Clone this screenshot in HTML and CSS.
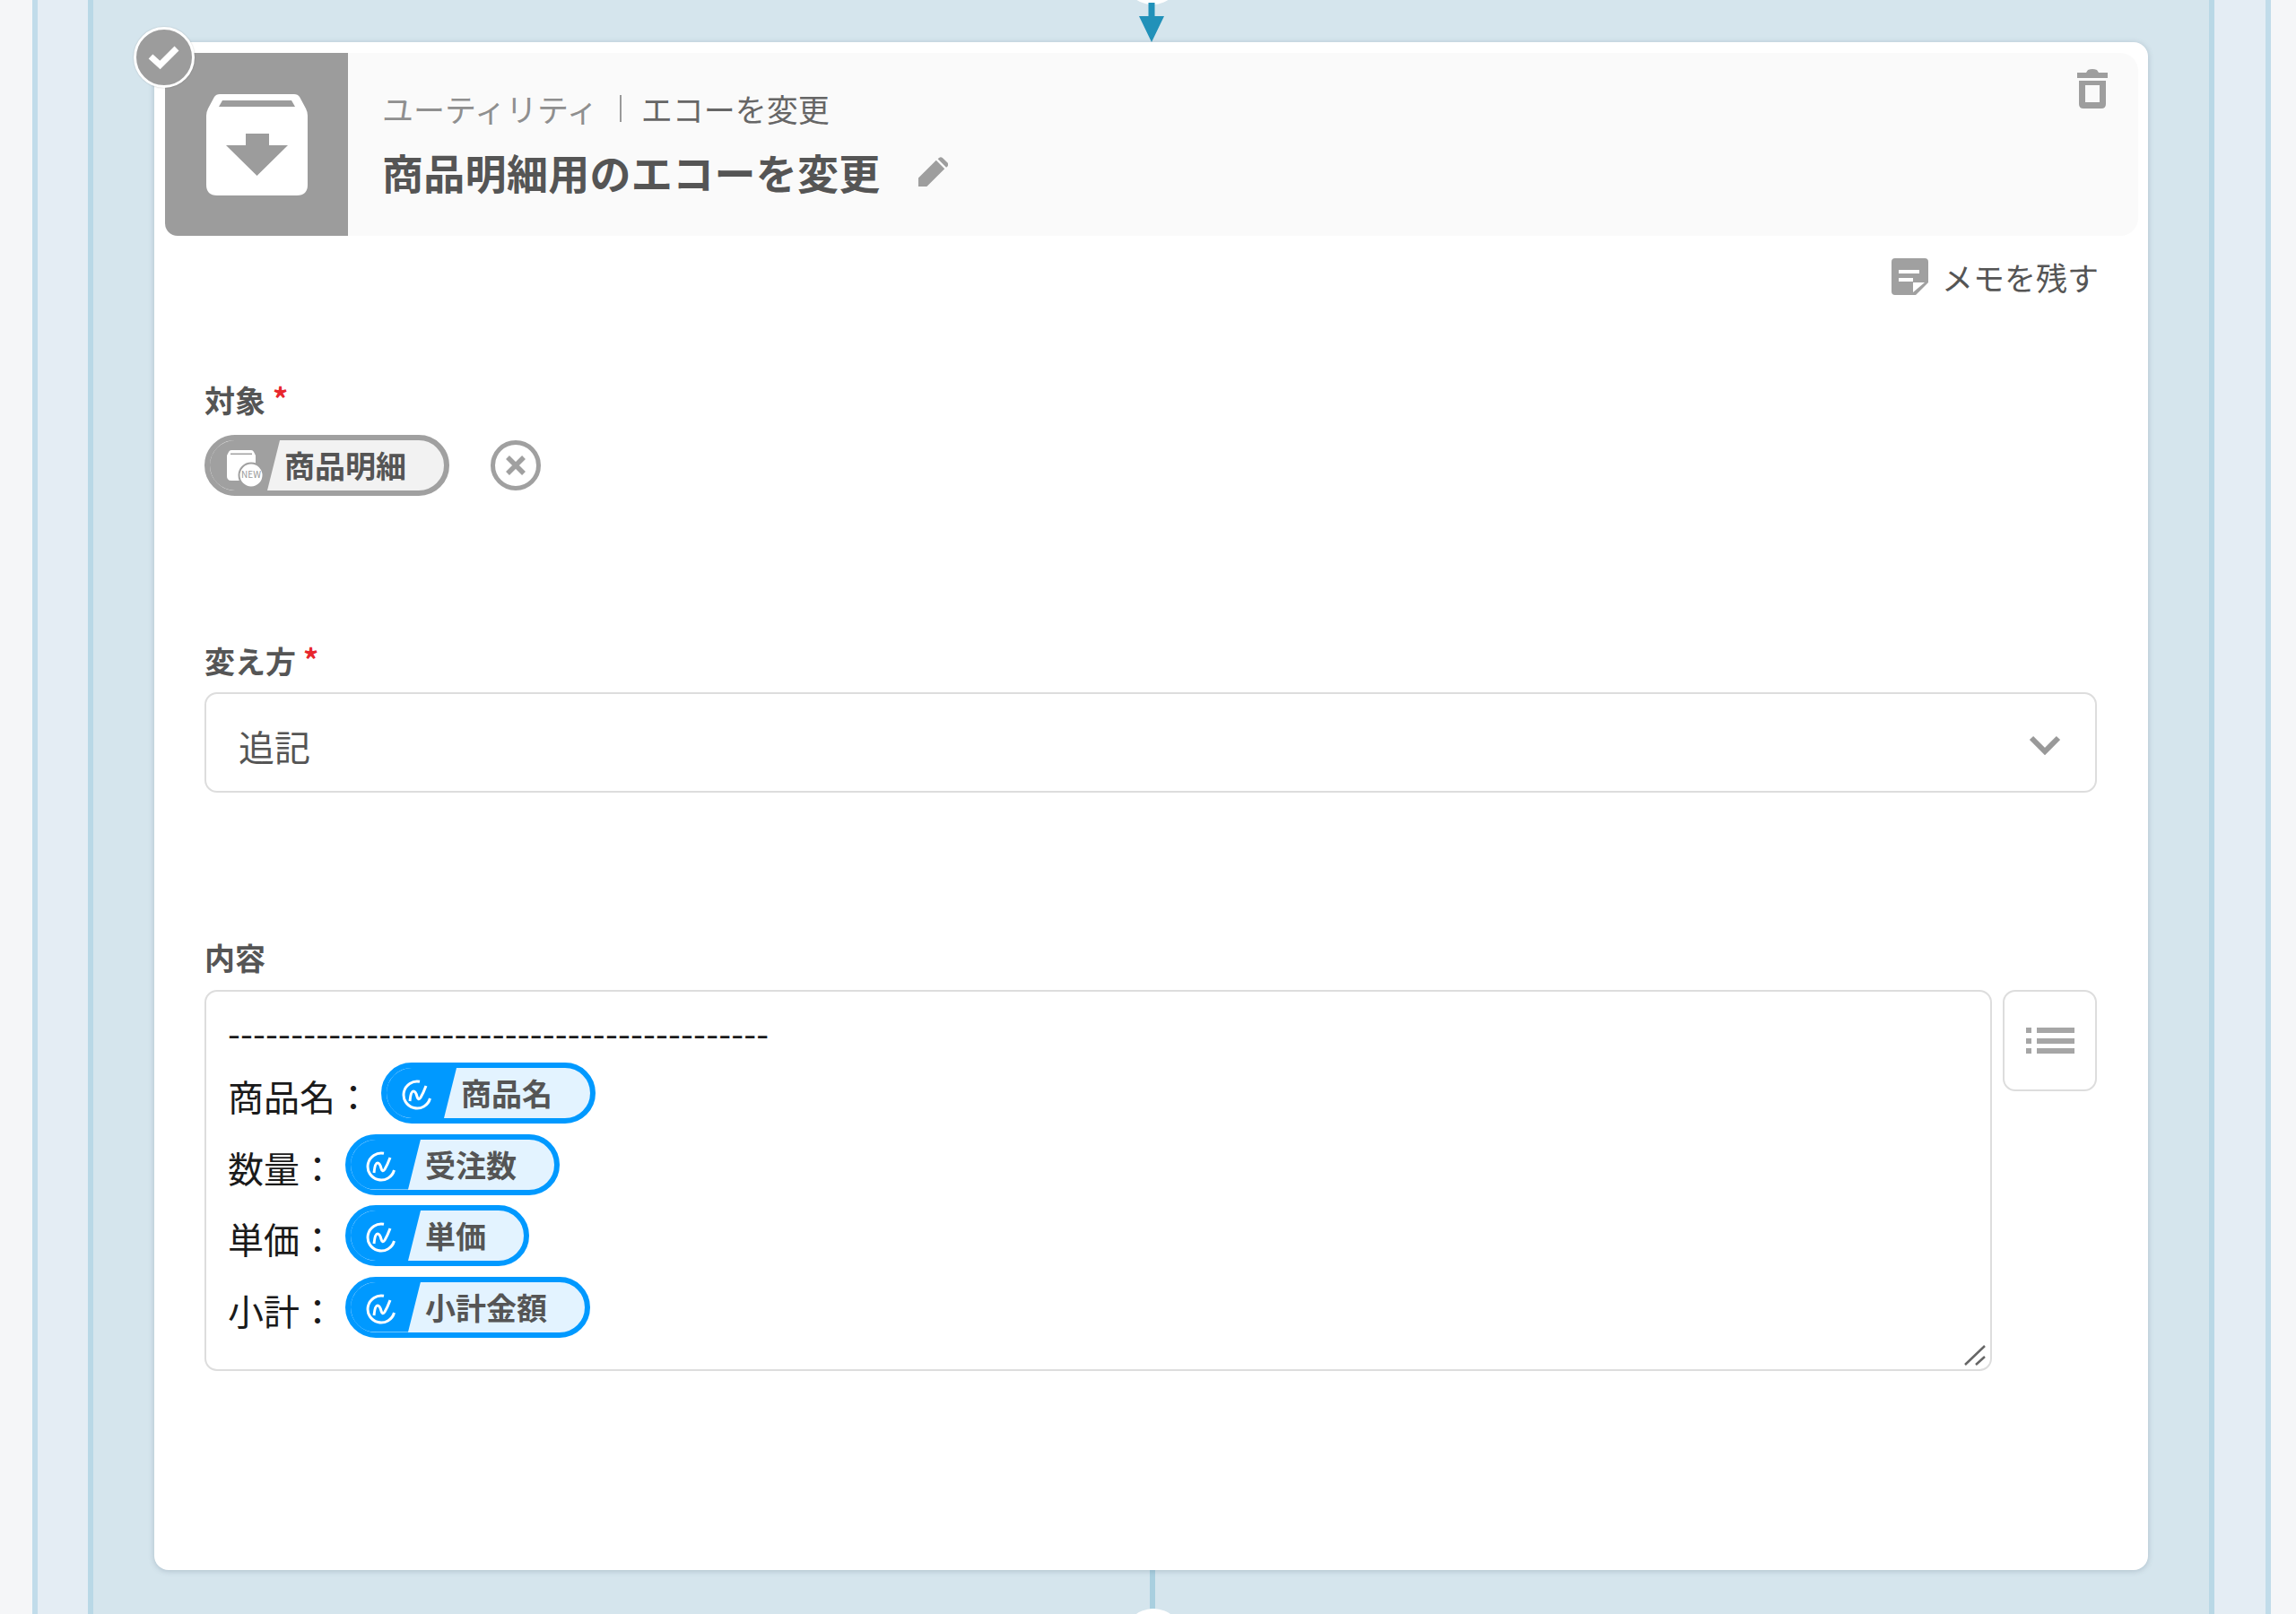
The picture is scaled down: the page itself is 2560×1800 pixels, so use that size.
FILE: index.html
```html
<!DOCTYPE html>
<html lang="ja">
<head>
<meta charset="utf-8">
<title>商品明細用のエコーを変更</title>
<link rel="stylesheet" href="styles.css">
</head>
<body>
<div class="outer">
  <div class="middle">
    <main class="lane">
      <div class="node-dot node-dot-top"></div>
      <svg class="arrow" width="28" height="44" viewBox="0 0 28 44"><path d="M10.500 0h7v15H28L14 44 0 15h10.500z"/></svg>
      <section class="card">
        <span class="check">
          <svg width="36" height="27" viewBox="0 0 36 27"><path d="M3 12l10.500 9.500L32 3" fill="none" stroke="#fff" stroke-width="7"/></svg>
        </span>
        <header class="head">
          <div class="app-icon">
            <svg width="113" height="113" viewBox="0 0 113 113"><path fill="#fff" fill-rule="evenodd" d="M15 0H98Q102 0 104 3L111 16Q113 20 113 24V101Q113 113 101 113H12Q0 113 0 101V24Q0 20 2 16L9 3Q11 0 15 0ZM18 7L14 14H99L95 7ZM44 44V57H22L56.500 91 91 57H70V44Z"/></svg>
          </div>
          <div class="head-text">
            <div class="crumbs"><span class="crumb-app">ユーティリティ</span><span class="crumb-op">エコーを変更</span></div>
            <div class="title-row">
              <h1 class="title">商品明細用のエコーを変更</h1>
              <svg class="pencil" width="34" height="34" viewBox="0 0 36 36"><path fill="#9e9e9e" d="M1 35V25L22 4l10 10L11 35zM24 2.500l1.500-1.500q2-1.500 4 0l6 6q1.500 2 0 4L34 12.500z"/></svg>
            </div>
          </div>
          <svg class="trash" width="34" height="44" viewBox="0 0 34 44"><path fill="#9e9e9e" fill-rule="evenodd" d="M0 4h10l2-3q5-2 10 0l2 3h10v6H0zM2 13h30v26q0 5-5 5H7q-5 0-5-5zM9 18v19h16V18z"/></svg>
        </header>

        <div class="memo-row">
          <svg width="41" height="41" viewBox="0 0 41 41"><path fill="#a0a0a0" fill-rule="evenodd" d="M4 0H37Q41 0 41 4V27L27 41H4Q0 41 0 37V4Q0 0 4 0ZM8 13V17H31V13ZM8 22V26H24V22ZM24 38L37 27H24Z"/></svg>
          <span class="memo-text">メモを残す</span>
        </div>

        <div class="field field-target">
          <label class="label">対象<span class="req">*</span></label>
          <div class="target-row">
            <span class="pill pill-gray">
              <svg class="pill-icon-gray" width="48" height="44" viewBox="0 0 48 44"><path fill="#fff" fill-rule="evenodd" d="M5 0H27Q29 0 30 2L32 6V29Q32 34 27 34H5Q0 34 0 29V6L2 2Q3 0 5 0ZM4 3.500V5H28V3.500Z"/><circle cx="27" cy="28" r="13.500" fill="#fff" stroke="#a0a0a0" stroke-width="2"/><text x="27" y="31" class="new-text">NEW</text></svg>
              <span class="pill-label">商品明細</span>
            </span>
            <svg class="clear" width="56" height="56" viewBox="0 0 56 56"><circle cx="28" cy="28" r="25.500" fill="none" stroke="#a0a0a0" stroke-width="5"/><path d="M19 19l18 18M37 19L19 37" stroke="#a0a0a0" stroke-width="5.500" fill="none"/></svg>
          </div>
        </div>

        <div class="field field-how">
          <label class="label">変え方<span class="req">*</span></label>
          <div class="select">
            <span class="select-value">追記</span>
            <svg class="chevron" width="36" height="22" viewBox="0 0 36 22"><path d="M3 3l15 15L33 3" fill="none" stroke="#999" stroke-width="6"/></svg>
          </div>
        </div>

        <div class="field field-body">
          <label class="label">内容</label>
          <div class="body-row">
            <div class="editor">
              <div class="dashes">-------------------------------------------</div>
              <div class="line">商品名：<span class="pill pill-blue"><svg class="wave" width="34" height="34" viewBox="0 0 34 34"><path d="M20 2.300A15 15 0 1 0 31.500 21M9 24Q10 13 13 13 15.500 13 17 19 18.500 24 21 20 24 15 27 7" fill="none" stroke="#fff" stroke-width="3"/></svg><span class="pill-label">商品名</span></span></div>
              <div class="line">数量：<span class="pill pill-blue"><svg class="wave" width="34" height="34" viewBox="0 0 34 34"><path d="M20 2.300A15 15 0 1 0 31.500 21M9 24Q10 13 13 13 15.500 13 17 19 18.500 24 21 20 24 15 27 7" fill="none" stroke="#fff" stroke-width="3"/></svg><span class="pill-label">受注数</span></span></div>
              <div class="line">単価：<span class="pill pill-blue"><svg class="wave" width="34" height="34" viewBox="0 0 34 34"><path d="M20 2.300A15 15 0 1 0 31.500 21M9 24Q10 13 13 13 15.500 13 17 19 18.500 24 21 20 24 15 27 7" fill="none" stroke="#fff" stroke-width="3"/></svg><span class="pill-label">単価</span></span></div>
              <div class="line">小計：<span class="pill pill-blue"><svg class="wave" width="34" height="34" viewBox="0 0 34 34"><path d="M20 2.300A15 15 0 1 0 31.500 21M9 24Q10 13 13 13 15.500 13 17 19 18.500 24 21 20 24 15 27 7" fill="none" stroke="#fff" stroke-width="3"/></svg><span class="pill-label">小計金額</span></span></div>
              <svg class="grip" width="24" height="24" viewBox="0 0 24 24"><path d="M1 22L23 1M13 22L23 13" stroke="#666" stroke-width="2.500" fill="none"/></svg>
            </div>
            <div class="list-btn">
              <svg width="54" height="32" viewBox="0 0 54 32"><path fill="#a6a6a6" d="M0 1h6v6H0zM12 1h42v6H12zM0 13h6v6H0zM12 13h42v6H12zM0 24h6v6H0zM12 24h42v6H12z"/></svg>
            </div>
          </div>
        </div>
      </section>
      <div class="connector"></div>
      <div class="node-dot node-dot-bottom"></div>
    </main>
  </div>
</div>
</body>
</html>
```

FILE: styles.css
```css
* { box-sizing: border-box; }
html, body { margin: 0; height: 1800px; overflow: hidden; }
body {
  background: #f5f6f8;
  color: #555;
  font-family: "Noto Sans CJK JP", "Noto Sans", sans-serif;
}
.outer { padding: 0 28px 0 36px; height: 1800px; }
.middle {
  height: 100%;
  background: #e4edf4;
  border-left: 6px solid #c1dcea;
  border-right: 6px solid #c1dcea;
  padding: 0 57px 0 56px;
}
.lane {
  height: 100%;
  background: #d5e5ed;
  border-left: 6px solid #b9d8e6;
  border-right: 6px solid #b9d8e6;
  padding: 0 68px;
  display: flex;
  flex-direction: column;
  align-items: center;
  overflow: hidden;
}
.node-dot {
  flex: none;
  width: 66px;
  height: 66px;
  border-radius: 50%;
  background: #fff;
}
.node-dot-top { margin: -61px 0 0 2px; }
.node-dot-bottom { margin-left: 4px; }
.arrow { flex: none; display: block; margin: -2px 0 0 1px; height: 44px; }
.arrow path { fill: #2191b9; }
.card {
  flex: none;
  position: relative;
  width: 100%;
  height: 1704px;
  background: #fff;
  border-radius: 16px;
  box-shadow: 0 1px 6px rgba(70, 90, 110, .28);
  padding: 12px 0 0 12px;
}
.check {
  position: absolute;
  left: -23px;
  top: -17px;
  width: 68px;
  height: 68px;
  border-radius: 50%;
  background: #9c9c9c;
  border: 3px solid #fff;
  box-shadow: 0 0 2px rgba(0,0,0,.2);
  display: flex;
  align-items: center;
  justify-content: center;
  z-index: 2;
}
.head {
  display: flex;
  position: relative;
  width: 2200px;
  height: 204px;
  background: #fafafa;
  border-radius: 0 20px 20px 14px;
}
.app-icon {
  flex: none;
  width: 204px;
  height: 204px;
  background: #9c9c9c;
  border-radius: 0 0 0 14px;
  display: flex;
  align-items: center;
  justify-content: center;
}
.head-text { padding: 40px 0 0 38px; }
.crumbs { display: flex; align-items: center; font-size: 35px; line-height: 44px; height: 44px; }
.crumb-app { color: #8f8f8f; padding-right: 24px; }
.crumb-op { color: #666; border-left: 2px solid #999; padding-left: 22px; line-height: 30px; }
.title-row { display: flex; align-items: center; margin-top: 14px; }
.title { margin: 0; font-size: 46px; line-height: 68px; font-weight: 700; color: #555; letter-spacing: .3px; }
.pencil { margin: 2px 0 0 41px; }
.trash { position: absolute; right: 34px; top: 18px; }
.memo-row {
  display: flex;
  align-items: center;
  justify-content: flex-end;
  gap: 15px;
  width: 2156px;
  margin-top: 25px;
  height: 41px;
}
.memo-text { font-size: 35px; line-height: 44px; color: #555; }
.field { padding-left: 44px; }
.label { display: block; font-size: 34px; font-weight: 700; line-height: 44px; color: #555; }
.req { color: #e8262d; margin-left: 8px; position: relative; top: -2px; }
.field-target { margin-top: 95px; }
.target-row { display: flex; align-items: center; margin-top: 17px; gap: 46px; }
.pill {
  display: inline-flex;
  align-items: center;
  position: relative;
  height: 68px;
  border-radius: 34px;
  border: 6px solid;
  padding: 0 42px 0 83px;
  font-size: 34px;
  font-weight: 700;
  color: #555;
  overflow: hidden;
  z-index: 0;
}
.pill::before {
  content: "";
  position: absolute;
  z-index: -1;
  left: 0;
  top: 0;
  bottom: 0;
  width: 78px;
  clip-path: polygon(0 0, 100% 0, 64px 100%, 0 100%);
}
.pill-label { line-height: 56px; }
.pill-gray { border-color: #a0a0a0; background: #f2f2f2; }
.pill-gray::before { background: #a0a0a0; }
.pill-blue { border-color: #0099ff; background: #e3f3ff; vertical-align: 6px; margin-left: 11px; line-height: 56px; }
.pill-blue::before { background: #0099ff; }
.pill-icon-gray { position: absolute; left: 19px; top: 11px; }
.new-text { font-size: 10px; font-weight: 400; fill: #999; text-anchor: middle; }
.wave { position: absolute; left: 17px; top: 13px; }
.clear { flex: none; }
.field-how { margin-top: 162px; }
.select {
  display: flex;
  align-items: center;
  justify-content: space-between;
  width: 2110px;
  height: 112px;
  margin-top: 13px;
  border: 2px solid #ddd;
  border-radius: 14px;
  padding: 0 38px 0 36px;
  font-size: 40px;
  color: #555;
}
.select-value { position: relative; top: 4px; }
.chevron { margin-top: 6px; }
.field-body { margin-top: 162px; }
.body-row { display: flex; align-items: flex-start; gap: 12px; margin-top: 14px; }
.editor {
  position: relative;
  width: 1993px;
  height: 425px;
  border: 2px solid #ddd;
  border-radius: 14px;
  padding: 23px 24px 0 24px;
  font-size: 40px;
  color: #1a1a1a;
  line-height: 79.500px;
}
.dashes { line-height: 44px; letter-spacing: .15px; white-space: nowrap; margin-bottom: 10px; }
.line { height: 79.500px; white-space: nowrap; }
.grip { position: absolute; right: 5px; bottom: 3px; }
.list-btn {
  flex: none;
  width: 105px;
  height: 113px;
  border: 2px solid #ddd;
  border-radius: 14px;
  display: flex;
  align-items: center;
  justify-content: center;
}
.connector { flex: none; width: 6px; height: 43px; margin-left: 2px; background: #a9cfdf; }
```
